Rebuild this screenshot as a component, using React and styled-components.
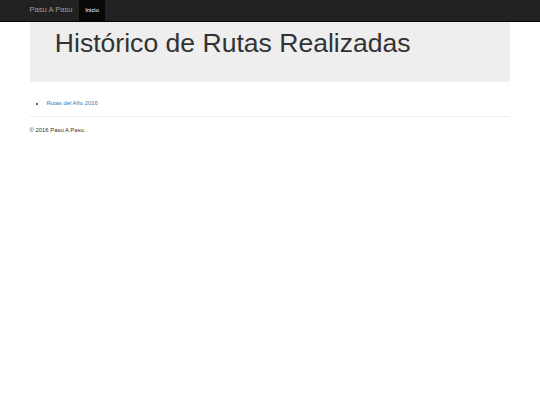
import React from "react";
import styled, { createGlobalStyle } from "styled-components";

const Global = createGlobalStyle`
  html, body { margin: 0; padding: 0; background: #fff; }
  body {
    font-family: "Liberation Sans", Arial, Helvetica, sans-serif;
    font-size: 14px;
    line-height: 1.42857143;
    color: #333;
  }
  * { box-sizing: border-box; }
`;

const Page = styled.div`
  zoom: 0.421875;
  width: 1280px;
  position: relative;
`;

const Navbar = styled.nav`
  position: absolute;
  top: 0;
  left: 0;
  right: 0;
  z-index: 10;
  min-height: 50px;
  background: #222;
  border-bottom: 1px solid #080808;
`;

const Container = styled.div`
  width: 1170px;
  margin: 0 auto;
  padding: 0 15px;
`;

const NavInner = styled(Container)`
  display: flex;
  align-items: stretch;
  height: 50px;
`;

const Brand = styled.a`
  display: block;
  margin-left: -15px;
  padding: 15px;
  font-size: 18px;
  line-height: 20px;
  height: 50px;
  color: #9d9d9d;
  text-decoration: none;
`;

const NavList = styled.ul`
  display: flex;
  list-style: none;
  margin: 0;
  padding: 0;
`;

const NavLink = styled.a`
  display: block;
  padding: 15px;
  line-height: 20px;
  font-size: 14px;
  text-decoration: none;
  color: ${(p) => (p.$active ? "#fff" : "#9d9d9d")};
  background: ${(p) => (p.$active ? "#080808" : "transparent")};
`;

const Jumbotron = styled.div`
  padding: 48px 60px;
  margin-bottom: 30px;
  background: #eee;
  border-radius: 6px;
`;

const Title = styled.h1`
  margin: 20px 0 10px;
  font-size: 63px;
  font-weight: 500;
  line-height: 1.1;
  color: inherit;
`;

const List = styled.ul`
  margin: 0 0 10px;
  padding: 10px 0 0 40px;
`;

const Link = styled.a`
  color: #337ab7;
  text-decoration: none;
`;

const Rule = styled.hr`
  margin: 20px 0;
  border: 0;
  border-top: 1px solid #eee;
  height: 0;
`;

const FooterText = styled.p`
  margin: 0 0 10px;
`;

export default function App() {
  return (
    <>
      <Global />
      <Page>
        <Navbar>
          <NavInner>
            <Brand href="#">Pasu A Pasu</Brand>
            <NavList>
              <li>
                <NavLink href="#" $active>
                  Inicio
                </NavLink>
              </li>
            </NavList>
          </NavInner>
        </Navbar>
        <Container>
          <Jumbotron>
            <Title>Histórico de Rutas Realizadas</Title>
          </Jumbotron>
          <List>
            <li>
              <Link href="#">Rutas del Año 2016</Link>
            </li>
          </List>
          <Rule />
          <footer>
            <FooterText>© 2016 Pasu A Pasu.</FooterText>
          </footer>
        </Container>
      </Page>
    </>
  );
}
